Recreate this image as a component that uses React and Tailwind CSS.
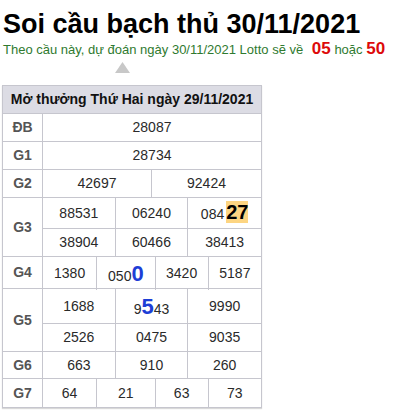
import React from "react";

// shared bits
const label = "w-[40px] shrink-0 border-r border-[#c6c6ce] flex items-center justify-center font-bold text-[#555]";
const cell = "flex items-center justify-center";

const Row = ({ name, children }) => (
  <div className="flex border-t border-[#c6c6ce]">
    <div className={label}>{name}</div>
    <div className="flex-1">{children}</div>
  </div>
);

const App = () => {
  return (
    <div className="w-[393px] h-[417px] bg-white overflow-hidden pl-[2px] font-['Liberation_Sans',Arial,sans-serif]">
      {/* TITLE */}
      <h1 className="pt-[9px] text-[27px] leading-[30px] font-bold text-black pl-[1px]">
        Soi cầu bạch thủ 30/11/2021
      </h1>
      {/* SUBTITLE */}
      <p className="text-[13px] leading-[20px] text-[#2f7a2f] pl-[1px]">
        Theo cầu này, dự đoán ngày 30/11/2021 Lotto sẽ về{" "}
        <b className="ml-[5px] text-[17px] text-[#dd0a0a]">05</b> hoặc{" "}
        <b className="text-[17px] text-[#dd0a0a]">50</b>
      </p>
      {/* ARROW */}
      <svg width="15" height="11" viewBox="0 0 15 11" className="ml-[113px] mt-[2px]">
        <polygon points="7.5,0 15,11 0,11" fill="#c8c8c8" />
      </svg>

      {/* TABLE */}
      <div className="mt-[12px] w-[260px] border border-[#c6c6ce] text-[14px] text-[#2a2a2a] shadow-[0_1px_1px_rgba(0,0,0,0.15)]">
        <div className="h-[27px] bg-[#dcdce4] flex items-center justify-center font-bold text-[#111]">
          Mở thưởng Thứ Hai ngày 29/11/2021
        </div>

        <Row name="ĐB">
          <div className={`${cell} h-[27px]`}>28087</div>
        </Row>
        <Row name="G1">
          <div className={`${cell} h-[27px]`}>28734</div>
        </Row>
        <Row name="G2">
          <div className="grid grid-cols-2 divide-x divide-[#c6c6ce] h-[27px]">
            <div className={cell}>42697</div>
            <div className={cell}>92424</div>
          </div>
        </Row>
        <Row name="G3">
          <div className="grid grid-cols-3 divide-x divide-[#c6c6ce] h-[30px]">
            <div className={cell}>88531</div>
            <div className={cell}>06240</div>
            <div className={cell}>
              <span>
                084
                <b className="ml-[2px] bg-[#fdd582] text-[20px] leading-[22px] text-black inline-block">27</b>
              </span>
            </div>
          </div>
          <div className="grid grid-cols-3 divide-x divide-[#c6c6ce] h-[28px] border-t border-[#c6c6ce]">
            <div className={cell}>38904</div>
            <div className={cell}>60466</div>
            <div className={cell}>38413</div>
          </div>
        </Row>
        <Row name="G4">
          <div className="grid grid-cols-[54fr_58fr_53fr_52fr] divide-x divide-[#c6c6ce] h-[31px]">
            <div className={cell}>1380</div>
            <div className={cell}>
              <span>
                050<b className="text-[22px] text-[#1d3ed6]">0</b>
              </span>
            </div>
            <div className={cell}>3420</div>
            <div className={cell}>5187</div>
          </div>
        </Row>
        <Row name="G5">
          <div className="grid grid-cols-3 divide-x divide-[#c6c6ce] h-[34px]">
            <div className={cell}>1688</div>
            <div className={cell}>
              <span>
                9<b className="text-[22px] text-[#1d3ed6]">5</b>43
              </span>
            </div>
            <div className={cell}>9990</div>
          </div>
          <div className="grid grid-cols-3 divide-x divide-[#c6c6ce] h-[28px] border-t border-[#c6c6ce]">
            <div className={cell}>2526</div>
            <div className={cell}>0475</div>
            <div className={cell}>9035</div>
          </div>
        </Row>
        <Row name="G6">
          <div className="grid grid-cols-3 divide-x divide-[#c6c6ce] h-[26px]">
            <div className={cell}>663</div>
            <div className={cell}>910</div>
            <div className={cell}>260</div>
          </div>
        </Row>
        <Row name="G7">
          <div className="grid grid-cols-[54fr_58fr_53fr_52fr] divide-x divide-[#c6c6ce] h-[28px]">
            <div className={cell}>64</div>
            <div className={cell}>21</div>
            <div className={cell}>63</div>
            <div className={cell}>73</div>
          </div>
        </Row>
      </div>
    </div>
  );
};

export default App;
